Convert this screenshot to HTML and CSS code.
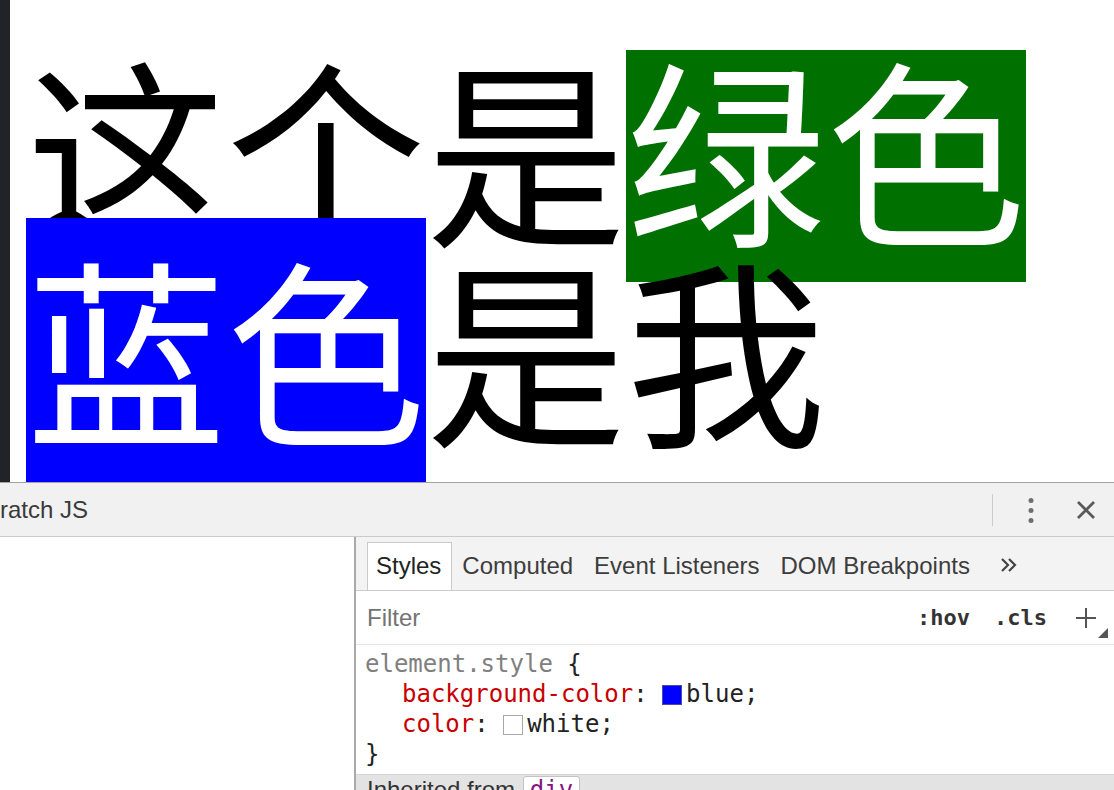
FILE: index.html
```html
<!DOCTYPE html>
<html lang="zh">
<head>
<meta charset="utf-8">
<title>Demo</title>
<link rel="stylesheet" href="styles.css">
</head>
<body>
<div class="screen">
  <div class="top">
    <div class="gutter"></div>
    <div class="canvas">
      <div class="row">
        <span class="seg">这个是</span><span class="seg green">绿色</span>
      </div>
      <div class="row">
        <span class="seg blue">蓝色</span><span class="seg">是我</span>
      </div>
    </div>
  </div>
  <div class="devtools">
    <div class="toolbar">
      <span class="drawer-tab">Scratch JS</span>
      <span class="spacer"></span>
      <span class="sep"></span>
      <svg class="kebab" width="6" height="26" viewBox="0 0 6 26"><circle cx="3" cy="3.5" r="2.5"/><circle cx="3" cy="13.5" r="2.5"/><circle cx="3" cy="23.5" r="2.5"/></svg>
      <svg class="close" width="20" height="20" viewBox="0 0 20 20"><path d="M2 2 L18 18 M18 2 L2 18"/></svg>
    </div>
    <div class="panes">
      <div class="elements"></div>
      <div class="sidebar">
        <div class="tabs">
          <span class="tab active">Styles</span>
          <span class="tab">Computed</span>
          <span class="tab">Event Listeners</span>
          <span class="tab">DOM Breakpoints</span>
          <svg class="more" width="18" height="16" viewBox="0 0 18 16"><path d="M2 2 L8 8 L2 14 M9 2 L15 8 L9 14"/></svg>
        </div>
        <div class="filter">
          <span class="filter-label">Filter</span>
          <span class="toggle">:hov</span>
          <span class="toggle cls">.cls</span>
          <svg class="plus" width="32" height="40" viewBox="0 0 32 40"><path class="plus-line" d="M0 20 H20 M10 10 V30"/><path class="corner" d="M22 40 L32 40 L32 30 Z"/></svg>
        </div>
        <div class="rules">
          <div class="line"><span class="selector">element.style</span> <span class="punct">{</span></div>
          <div class="line prop"><span class="name">background-color</span><span class="punct">: </span><span class="swatch swatch-blue"></span><span class="value">blue;</span></div>
          <div class="line prop"><span class="name">color</span><span class="punct">: </span><span class="swatch swatch-white"></span><span class="value">white;</span></div>
          <div class="line"><span class="punct">}</span></div>
        </div>
        <div class="inherited">Inherited from <span class="pill">div</span></div>
      </div>
    </div>
  </div>
</div>
</body>
</html>
```
FILE: styles.css
```css
html, body {
  margin: 0;
  padding: 0;
  background: #ffffff;
}

.screen {
  width: 1114px;
  height: 790px;
  overflow: hidden;
  display: flex;
  flex-direction: column;
}

/* ---------- page area ---------- */
.top {
  height: 482px;
  display: flex;
  overflow: hidden;
  flex: none;
}

.gutter {
  width: 10px;
  background: #212328;
  flex: none;
}

.canvas {
  flex: 1;
  background: #ffffff;
  padding: 45px 0 0 16px;
  overflow: hidden;
  font-family: "Noto Sans CJK SC", sans-serif;
  font-size: 200px;
  color: #000000;
}

.row {
  display: flex;
  align-items: flex-start;
  height: 200px;
}

.seg {
  flex: none;
  display: block;
  line-height: 200px;
  height: 200px;
  white-space: nowrap;
}

.green {
  background: #007000;
  color: #ffffff;
  margin-top: 5px;
  height: 232px;
  line-height: 190px;
}

.blue {
  background: #0000ff;
  color: #ffffff;
  margin-top: -27px;
  height: 320px;
  line-height: 254px;
}

/* ---------- devtools ---------- */
.devtools {
  flex: 1;
  box-sizing: border-box;
  border-top: 1px solid #a3a3a3;
  display: flex;
  flex-direction: column;
  font-family: "Liberation Sans", Arial, sans-serif;
  font-size: 24px;
  color: #333333;
}

.toolbar {
  height: 54px;
  box-sizing: border-box;
  border-bottom: 1px solid #cbcbcb;
  background: #f1f1f1;
  display: flex;
  align-items: center;
  padding-right: 18px;
  flex: none;
}

.drawer-tab {
  margin-left: -28px;
  color: #3a3a3a;
  white-space: nowrap;
}

.spacer {
  flex: 1;
}

.sep {
  width: 1px;
  height: 32px;
  background: #cccccc;
  margin-right: 35px;
}

.kebab {
  fill: #6e6e6e;
  margin-right: 42px;
}

.close {
  stroke: #595959;
  stroke-width: 2.8;
  fill: none;
}

.panes {
  flex: 1;
  display: flex;
  min-height: 0;
}

.elements {
  width: 354px;
  flex: none;
  background: #ffffff;
  border-right: 2px solid #a9a9a9;
}

.sidebar {
  flex: 1;
  display: flex;
  flex-direction: column;
  min-width: 0;
}

.tabs {
  height: 54px;
  box-sizing: border-box;
  border-bottom: 1px solid #cccccc;
  background: #f3f3f3;
  display: flex;
  align-items: flex-end;
  padding-left: 11px;
  flex: none;
}

.tab {
  height: 48px;
  box-sizing: border-box;
  line-height: 46px;
  padding: 0 10px 0 9px;
  border: 1px solid transparent;
  border-bottom: 0;
  color: #3d3d3d;
  white-space: nowrap;
}

.tab.active {
  background: #ffffff;
  border-color: #c9c9c9;
  color: #222222;
  padding-left: 8px;
}

.more {
  align-self: center;
  margin-left: 19px;
  margin-top: 3px;
  fill: none;
  stroke: #444444;
  stroke-width: 2.2;
}

.filter {
  height: 54px;
  box-sizing: border-box;
  border-bottom: 1px solid #e6e6e6;
  display: flex;
  align-items: center;
  padding: 0 6px 0 11px;
  flex: none;
}

.filter-label {
  flex: 1;
  color: #737373;
}

.toggle {
  font-family: "DejaVu Sans Mono", monospace;
  font-weight: bold;
  font-size: 22px;
  color: #333333;
}

.cls {
  margin-left: 24px;
}

.plus {
  margin-left: 29px;
}

.plus-line {
  stroke: #555555;
  stroke-width: 2;
  fill: none;
}

.corner {
  fill: #555555;
}

.rules {
  padding: 4px 0 5px 9px;
  font-family: "DejaVu Sans Mono", monospace;
  font-size: 24px;
  line-height: 30px;
  color: #222222;
  flex: none;
}

.line {
  white-space: pre;
}

.prop {
  padding-left: 37px;
}

.selector {
  color: #808080;
}

.name {
  color: #c80000;
}

.swatch {
  display: inline-block;
  width: 18px;
  height: 18px;
  vertical-align: -3px;
  margin-right: 4px;
}

.swatch-blue {
  background: #0000ff;
  border: 1px solid #4a4aa8;
}

.swatch-white {
  background: #ffffff;
  border: 1px solid #a8a8a8;
}

.inherited {
  flex: 1;
  border-top: 1px solid #d4d4d4;
  background: #e3e3e3;
  padding: 0 0 0 11px;
  line-height: 30px;
  color: #333333;
  white-space: nowrap;
}

.pill {
  display: inline-block;
  background: #ffffff;
  border: 1px solid #c2c2c2;
  border-radius: 3px;
  padding: 0 6px;
  margin-left: 1px;
  line-height: 26px;
  font-family: "DejaVu Sans Mono", monospace;
  color: #881280;
}
```
